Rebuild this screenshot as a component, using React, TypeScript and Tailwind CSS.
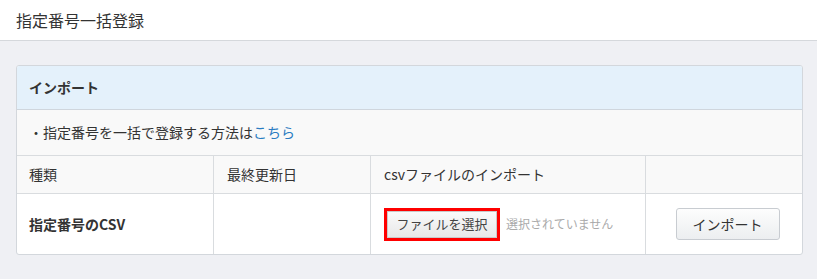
const font = { fontFamily: '"Noto Sans CJK JP", "Noto Sans", sans-serif' };

export default function App() {
  return (
    <div className="h-[279px] w-[817px] bg-[#eff0f4] text-[#333]" style={font}>
      <header className="flex h-[41px] items-center border-b border-[#d5d8dc] bg-white pl-4">
        <h1 className="text-[16px] text-[#333]">指定番号一括登録</h1>
      </header>

      <main className="px-4 pt-6">
        <section className="w-[787px] overflow-hidden rounded-[3px] border border-[#d3d7dc] bg-white">
          <div className="flex h-[44px] items-center border-b border-[#cfd6dd] bg-[#e4f1fb] pl-3">
            <h2 className="text-[14px] font-bold text-[#333]">インポート</h2>
          </div>

          <div className="flex h-[46px] items-center border-b border-[#d9dcdf] bg-[#f9f9f9] pl-3 text-[14px]">
            ・指定番号を一括で登録する方法は
            <a href="#" className="text-[#2a7cc2]">こちら</a>
          </div>

          <div className="grid grid-cols-[196px_157px_275px_1fr] text-[14px]">
            <div className="flex h-[38px] items-center border-b border-[#d9dcdf] bg-[#f9f9f9] pl-3">種類</div>
            <div className="flex h-[38px] items-center border-b border-l border-[#d9dcdf] bg-[#f9f9f9] pl-[13px]">最終更新日</div>
            <div className="flex h-[38px] items-center border-b border-l border-[#d9dcdf] bg-[#f9f9f9] pl-[13px]">csvファイルのインポート</div>
            <div className="h-[38px] border-b border-l border-[#d9dcdf] bg-[#f9f9f9]" />

            <div className="flex h-[60px] items-center pl-3 font-bold">指定番号のCSV</div>
            <div className="h-[60px] border-l border-[#d9dcdf]" />
            <div className="flex h-[60px] items-center border-l border-[#d9dcdf] pl-[13px]">
              <div className="h-[33px] w-[116px] border-[3px] border-[#ff0000]">
                <div className="flex h-full items-center justify-center border border-[#c9c9c9] bg-gradient-to-b from-[#fafafa] to-[#e8e8e8] text-[13px] text-[#444]">
                  ファイルを選択
                </div>
              </div>
              <span className="ml-[6px] text-[12px] text-[#aaa]">選択されていません</span>
            </div>
            <div className="flex h-[60px] items-center justify-center border-l border-[#d9dcdf] pl-[7px]">
              <button className="h-[32px] w-[104px] rounded-[3px] border border-[#c8ccd1] bg-gradient-to-b from-[#fdfdfd] to-[#eceef0] text-[14px] text-[#333]">
                インポート
              </button>
            </div>
          </div>
        </section>
      </main>
    </div>
  );
}
